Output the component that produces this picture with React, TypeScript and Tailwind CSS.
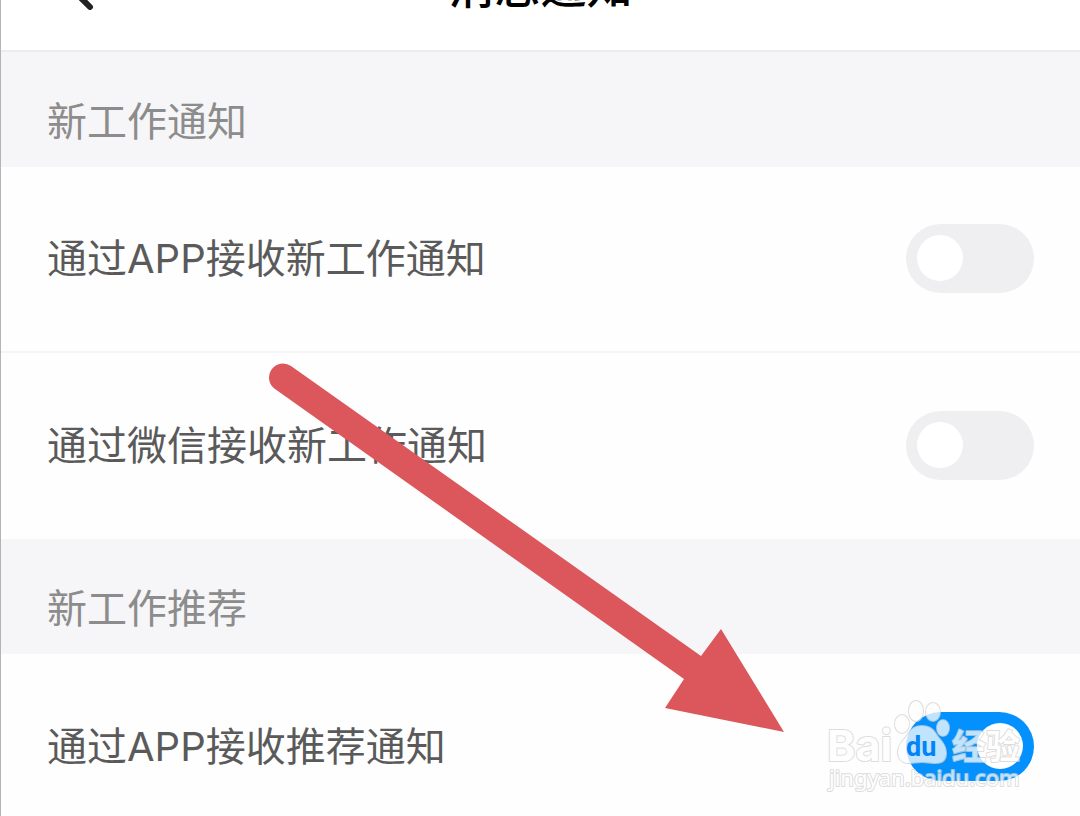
import React, { useState } from "react";

const sections = [
  {
    title: "新工作通知",
    items: [
      { id: "job-app", label: "通过APP接收新工作通知", enabled: false },
      { id: "job-wechat", label: "通过微信接收新工作通知", enabled: false },
    ],
  },
  {
    title: "新工作推荐",
    items: [{ id: "recommend-app", label: "通过APP接收推荐通知", enabled: true }],
  },
];

type SettingRowProps = {
  id: string;
  label: string;
  enabled: boolean;
};

function SettingRow({ id, label, enabled }: SettingRowProps) {
  const [checked, setChecked] = useState(enabled);

  return (
    <li className="flex h-[186px] items-center justify-between pb-0.5 pl-[46px] pr-[46px]">
      <label htmlFor={id} className="pt-0.5 text-[40px] leading-[56px] text-[#5a5a5a]">
        {label}
      </label>
      <input
        id={id}
        type="checkbox"
        checked={checked}
        onChange={(e) => setChecked(e.target.checked)}
        className="flex h-[69px] w-32 shrink-0 cursor-pointer appearance-none items-center rounded-full bg-[#efeff2] px-[11px] before:size-[46px] before:rounded-full before:bg-white before:content-[''] checked:justify-end checked:bg-[#0591fd]"
      />
    </li>
  );
}

function Header() {
  return (
    <header className="flex h-[52px] items-end overflow-hidden border-b-2 border-[#ececec] bg-white px-[61px] pb-10">
      <button type="button" aria-label="返回" className="h-14 w-8 shrink-0">
        <svg viewBox="0 0 32 56" className="h-14 w-8" fill="none" stroke="#222" strokeWidth="6" strokeLinecap="round" strokeLinejoin="round">
          <path d="M27 5 4 29l24 24" />
        </svg>
      </button>
      <h1 className="grow pr-8 text-center text-[46px] font-medium leading-[48px] text-black">
        消息通知
      </h1>
    </header>
  );
}

function Arrow() {
  return (
    <svg
      viewBox="0 0 516 370"
      className="pointer-events-none absolute left-[267px] top-[363px] h-[370px] w-[516px]"
      aria-hidden="true"
    >
      <path
        d="M23 3 433 293 453 266 516 369 397 345 416 316 7 26A14 14 0 0 1 23 3Z"
        fill="#db575c"
      />
    </svg>
  );
}

function Watermark() {
  return (
    <svg
      viewBox="0 0 210 106"
      className="pointer-events-none absolute right-[50px] top-[695px] h-[106px] w-[210px] opacity-75"
      fill="#fff"
      stroke="#d2d2d2"
      strokeWidth="2"
      strokeLinejoin="round"
      paintOrder="stroke"
    >
      <text x="7" y="66" fontSize="43" fontWeight="700" fontFamily="Inter, sans-serif">
        Bai
      </text>
      <ellipse cx="82" cy="29" rx="7" ry="9" />
      <ellipse cx="96" cy="16" rx="7" ry="10" />
      <ellipse cx="113" cy="17" rx="7" ry="9" />
      <ellipse cx="123" cy="33" rx="6" ry="8" />
      <path d="M102 31c7 0 11 3 14 8 3 6 10 9 10 19 0 8-5 10-10 10-6 0-9-1-14-1s-9 1-14 1c-6 0-10-4-10-11 0-9 7-12 10-18 3-5 7-8 14-8Z" />
      <text x="86" y="61" fontSize="27" fontWeight="700" fontFamily="Roboto, sans-serif" fill="#0080f5" stroke="none">
        du
      </text>
      <text x="132" y="64" fontSize="34" fontWeight="700" fontFamily="'Noto Sans CJK SC', sans-serif">
        经验
      </text>
      <text x="9" y="91" fontSize="22" fontFamily="'Noto Sans', sans-serif">
        jingyan.baidu.com
      </text>
    </svg>
  );
}

function App() {
  return (
    <div className="relative h-screen overflow-hidden border-l border-[#b4b4b4] bg-[#fefefe] font-[Inter,'Noto_Sans_CJK_SC',sans-serif]">
      <Header />
      <main>
        {sections.map((section) => (
          <section key={section.title}>
            <h2 className="bg-[#f6f6f8] px-[46px] pb-[17px] pt-[42px] text-[40px] leading-[56px] text-[#8c8c8c]">
              {section.title}
            </h2>
            <ul className="divide-y-2 divide-[#f5f5f6]">
              {section.items.map((item) => (
                <SettingRow key={item.id} {...item} />
              ))}
            </ul>
          </section>
        ))}
      </main>
      <Arrow />
      <Watermark />
    </div>
  );
}

export default App;
